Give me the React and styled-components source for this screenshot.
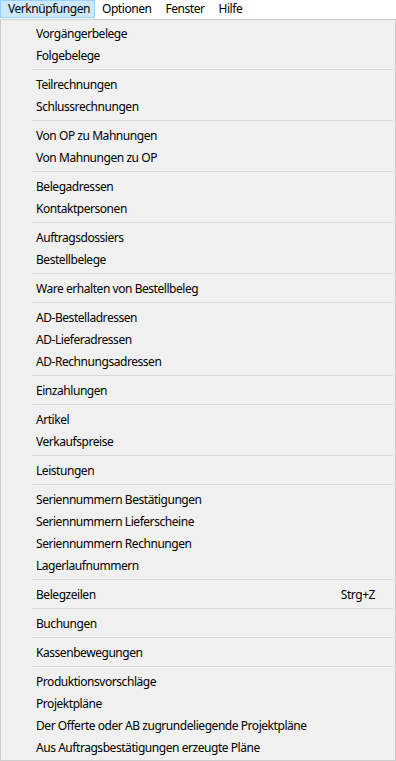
import styled, { createGlobalStyle } from 'styled-components';

const GlobalStyle = createGlobalStyle`
    html, body {
        margin: 0;
        padding: 0;
        background: #ffffff;
    }
    body {
        font-family: "Noto Sans", "Open Sans", sans-serif;
        font-size: 12px;
        letter-spacing: -0.45px;
        color: #000;
    }
`;

const menuTitles = ['Verknüpfungen', 'Optionen', 'Fenster', 'Hilfe'];

const groups = [
    ['Vorgängerbelege', 'Folgebelege'],
    ['Teilrechnungen', 'Schlussrechnungen'],
    ['Von OP zu Mahnungen', 'Von Mahnungen zu OP'],
    ['Belegadressen', 'Kontaktpersonen'],
    ['Auftragsdossiers', 'Bestellbelege'],
    ['Ware erhalten von Bestellbeleg'],
    ['AD-Bestelladressen', 'AD-Lieferadressen', 'AD-Rechnungsadressen'],
    ['Einzahlungen'],
    ['Artikel', 'Verkaufspreise'],
    ['Leistungen'],
    ['Seriennummern Bestätigungen', 'Seriennummern Lieferscheine', 'Seriennummern Rechnungen', 'Lagerlaufnummern'],
    [{ label: 'Belegzeilen', shortcut: 'Strg+Z' }],
    ['Buchungen'],
    ['Kassenbewegungen'],
    ['Produktionsvorschläge', 'Projektpläne', 'Der Offerte oder AB zugrundeliegende Projektpläne', 'Aus Auftragsbestätigungen erzeugte Pläne'],
];

const App = () => {
    return (
        <>
            <GlobalStyle />
            <Window>
                <MenuBar>
                    {menuTitles.map((title, i) => (
                        <MenuTitle key={title} $open={i === 0}>{title}</MenuTitle>
                    ))}
                </MenuBar>
                <Dropdown>
                    {groups.map((group, gi) => (
                        <Group key={gi}>
                            {gi > 0 && <Separator />}
                            {group.map(entry => {
                                const item = typeof entry === 'string' ? { label: entry } : entry;
                                return (
                                    <Item key={item.label}>
                                        <span>{item.label}</span>
                                        {item.shortcut && <Shortcut>{item.shortcut}</Shortcut>}
                                    </Item>
                                );
                            })}
                        </Group>
                    ))}
                </Dropdown>
            </Window>
        </>
    );
}

const Window = styled.div`
    width: 396px;
    height: 761px;
    display: flex;
    flex-direction: column;
    background: #ffffff;
    overflow: hidden;
`;

const MenuBar = styled.div`
    display: flex;
    height: 19px;
    background: #ffffff;
`;

const MenuTitle = styled.div`
    height: 18px;
    box-sizing: border-box;
    padding: ${props => props.$open ? '0 7px' : '0 6px'};
    display: flex;
    align-items: center;
    line-height: 1;
    border: 1px solid ${props => props.$open ? '#99d1ff' : 'transparent'};
    background: ${props => props.$open ? '#cce8ff' : 'transparent'};
    width: ${props => props.$open ? '95px' : 'auto'};
`;

const Dropdown = styled.div`
    width: 396px;
    height: 742px;
    box-sizing: border-box;
    border: 1px solid #cccccc;
    background: #f0f0f0;
    padding: 2px;
    display: flex;
    flex-direction: column;
`;

const Group = styled.div`
    display: flex;
    flex-direction: column;
`;

const Separator = styled.div`
    height: 7px;
    margin-left: 29px;
    display: flex;
    align-items: center;
    &::after {
        content: '';
        flex: 1;
        height: 1px;
        background: #d7d7d7;
    }
`;

const Item = styled.div`
    height: 22px;
    display: flex;
    align-items: center;
    justify-content: space-between;
    padding: 0 18px 0 33px;
    white-space: nowrap;
`;

const Shortcut = styled.span`
    color: #000;
`;

export default App;
